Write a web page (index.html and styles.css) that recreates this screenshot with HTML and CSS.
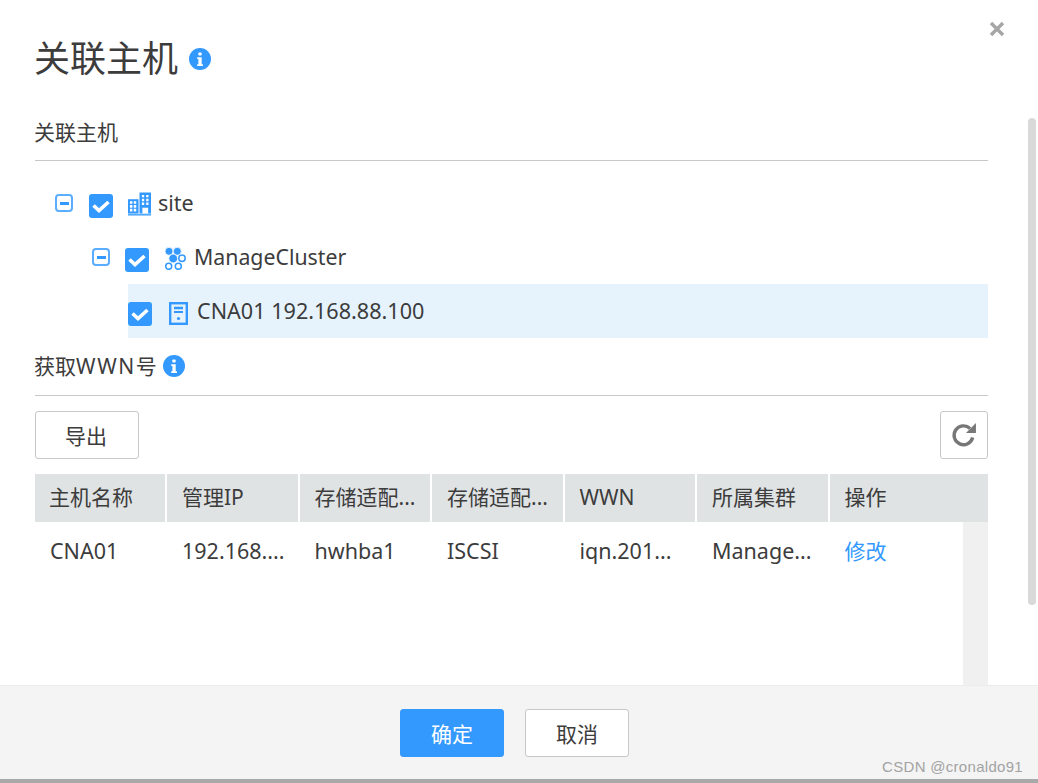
FILE: index.html
```html
<!DOCTYPE html>
<html lang="zh-CN">
<head>
<meta charset="utf-8">
<title>关联主机</title>
<link rel="stylesheet" href="styles.css">
</head>
<body>
<div class="dialog">
  <main class="content">
    <header class="title-row">
      <h1 class="title">关联主机</h1>
      <svg class="info info-lg" viewBox="0 0 22 22"><circle cx="11" cy="11" r="11" fill="#3399ff"/><rect x="9.3" y="4.4" width="3.4" height="3" rx="1" fill="#fff"/><path d="M8.2 9.2h4.5v7h1.2v1.8H8.2v-1.8h1.2v-5.2H8.2z" fill="#fff"/></svg>
    </header>

    <h2 class="section section-first"><span class="section-text">关联主机</span></h2>
    <div class="tree">
      <div class="node level-0">
        <span class="toggle"><i></i></span>
        <span class="check"><svg viewBox="0 0 24 24"><path d="M4.500 11.500l5.500 5 9.500-8.500" fill="none" stroke="#fff" stroke-width="3.600"/></svg></span>
        <svg class="node-icon icon-site" viewBox="0 0 24 24"><g fill="#3399ff"><path d="M0 7h11v15H0z"/><path d="M12 0h12v22H12z"/><path d="M0 22.600h24V24H0z"/></g><g fill="#fff"><path d="M2 9h2.600v2.800H2zM6 9h2.600v2.800H6zM2 13h2.600v2.800H2zM6 13h2.600v2.800H6zM2 17h2.600v2.800H2zM6 17h2.600v2.800H6z"/><path d="M14.500 2.500h2.400v2.500h-2.400zM19 2.500h2.400v2.500H19zM14.500 6.500h2.400v2.500h-2.400zM19 6.500h2.400v2.500H19zM14.500 10.500h2.400v2.500h-2.400zM19 10.500h2.400v2.500H19zM15 16h6v6h-6z"/></g></svg>
        <span class="label label-site">site</span>
      </div>
      <div class="node level-1">
        <span class="toggle"><i></i></span>
        <span class="check"><svg viewBox="0 0 24 24"><path d="M4.500 11.500l5.500 5 9.500-8.500" fill="none" stroke="#fff" stroke-width="3.600"/></svg></span>
        <svg class="node-icon icon-cluster" viewBox="0 0 21 23"><g fill="#3399ff" stroke="#fff" stroke-width="0.800"><circle cx="4" cy="4.300" r="4"/><circle cx="12.300" cy="4.300" r="4"/><circle cx="8.200" cy="11.500" r="4.400"/></g><g fill="none" stroke="#3399ff" stroke-width="1.500"><circle cx="17" cy="11.300" r="3.200"/><circle cx="3.700" cy="19.300" r="3"/><circle cx="13.300" cy="19.300" r="3"/></g></svg>
        <span class="label label-cluster">ManageCluster</span>
      </div>
      <div class="node level-2 selected">
        <span class="check"><svg viewBox="0 0 24 24"><path d="M4.500 11.500l5.500 5 9.500-8.500" fill="none" stroke="#fff" stroke-width="3.600"/></svg></span>
        <svg class="node-icon icon-host" viewBox="0 0 19 23"><path d="M0 0h19v23H0z" fill="#3399ff"/><path d="M2.400 2.400h14.200v18.200H2.400z" fill="#e6f3fd"/><path d="M5 4.800h9v2.400H5zM5 9h9v2H5z" fill="#3399ff"/><circle cx="9.500" cy="16.500" r="1.600" fill="#3399ff"/></svg>
        <span class="label label-host">CNA01 192.168.88.100</span>
      </div>
    </div>

    <h2 class="section section-wwn"><span class="section-text">获取<span class="wide">WWN</span>号</span>
      <svg class="info info-sm" viewBox="0 0 22 22"><circle cx="11" cy="11" r="11" fill="#3399ff"/><rect x="9.300" y="4.400" width="3.400" height="3" rx="1" fill="#fff"/><path d="M8.200 9.200h4.500v7h1.200v1.800H8.200v-1.800h1.200v-5.200H8.200z" fill="#fff"/></svg>
    </h2>

    <div class="toolbar">
      <button class="btn btn-export">导出</button>
      <button class="btn-icon" aria-label="刷新"><svg viewBox="0 0 24 24"><path d="M20 14.300A8.700 8.700 0 1 1 17.600 6" fill="none" stroke="#777" stroke-width="3.100"/><path d="M23 1v9.200h-9.200z" fill="#777"/></svg></button>
    </div>

    <div class="table">
      <div class="thead">
        <div class="th th-first">主机名称</div>
        <div class="th">管理IP</div>
        <div class="th">存储适配...</div>
        <div class="th">存储适配...</div>
        <div class="th">WWN</div>
        <div class="th">所属集群</div>
        <div class="th">操作</div>
      </div>
      <div class="tbody">
        <div class="tr">
          <div class="td">CNA01</div>
          <div class="td">192.168....</div>
          <div class="td">hwhba1</div>
          <div class="td">ISCSI</div>
          <div class="td">iqn.201...</div>
          <div class="td">Manage...</div>
          <div class="td link">修改</div>
        </div>
      </div>
    </div>
  </main>

  <footer class="footer">
    <button class="btn btn-primary">确定</button>
    <button class="btn">取消</button>
  </footer>
  <div class="edge"></div>

  <button class="close" aria-label="关闭"><svg viewBox="0 0 16 16"><path d="M2 2l12 12M14 2L2 14" stroke="#a6a6a6" stroke-width="3.400" fill="none"/></svg></button>
  <div class="scroll-thumb"></div>
  <div class="watermark">CSDN @cronaldo91</div>
</div>
</body>
</html>
```
FILE: styles.css
```css
* { box-sizing: border-box; }
html, body { margin: 0; height: 100%; overflow: hidden; background: #fff; }
body { font-family: "Noto Sans", "Noto Sans CJK SC", sans-serif; color: #3c3c3c; }

.dialog { position: relative; width: 1038px; height: 783px; display: flex; flex-direction: column; }
.content { height: 685px; flex: none; padding: 0 50px 0 35px; overflow: hidden; }

.title-row { height: 118px; display: flex; align-items: center; gap: 11px; }
.title { margin: 0 0 0 -1px; font-size: 36px; font-weight: 400; line-height: 1; }
.info { display: block; flex: none; }
.info-lg { width: 22px; height: 22px; }
.info-sm { width: 22px; height: 22px; margin-left: 6px; }

.section { margin: 0; font-size: 21px; font-weight: 400; line-height: 30px; border-bottom: 1px solid #c8c8c8; display: flex; align-items: center; }
.section-text { margin-left: -1px; }
.wide { letter-spacing: 1.600px; }
.section-first { height: 43px; padding-bottom: 14px; }
.section-wwn { height: 58px; padding-bottom: 1px; }

.tree { padding-top: 15px; }
.node { height: 54px; display: flex; align-items: center; font-size: 21.500px; }
.label { position: relative; top: -1px; }
.label-cluster { font-size: 21.300px; }
.label-host { font-size: 21.600px; }
.level-0 { padding-left: 20px; }
.level-1 { padding-left: 57px; }
.level-1 .toggle { margin-right: 15px; }
.level-2 { margin-left: 93px; }
.selected { background: #e6f3fd; }
.toggle { width: 18px; height: 18px; border: 2px solid #5aadff; border-radius: 4px; display: flex; align-items: center; justify-content: center; margin-right: 16px; flex: none; }
.toggle i { display: block; width: 9px; height: 3px; background: #3399ff; }
.check { width: 24px; height: 24px; background: #3399ff; border-radius: 3px; display: block; flex: none; position: relative; top: 3px; }
.check svg { display: block; width: 24px; height: 24px; }
.node-icon { display: block; flex: none; position: relative; }
.icon-site { width: 23px; height: 24px; margin-left: 15px; margin-right: 7px; top: 1px; }
.icon-cluster { width: 21px; height: 23px; margin-left: 16px; margin-right: 8px; top: 1px; }
.icon-host { width: 19px; height: 23px; margin-left: 17px; margin-right: 9px; top: 2px; }

.toolbar { display: flex; justify-content: space-between; padding-top: 15px; height: 78px; align-items: flex-start; }
.btn { width: 104px; height: 48px; background: #fff; border: 1px solid #c8c8c8; border-radius: 3px; font: inherit; font-size: 21px; color: #3c3c3c; padding: 0 0 0 1px; }
.btn-export { padding: 0 2px 0 0; }
.btn-primary { background: #3399ff; border-color: #3399ff; color: #fff; }
.btn-icon { width: 48px; height: 48px; background: #fff; border: 1px solid #c8c8c8; border-radius: 3px; padding: 0; display: flex; align-items: center; justify-content: center; }
.btn-icon svg { display: block; width: 26px; height: 26px; }

.table { width: 953px; }
.thead, .tr { display: grid; grid-template-columns: 132px repeat(5, 132.500px) 1fr; }
.thead { height: 48px; }
.th { background: #e0e3e4; border-right: 2px solid #fff; padding-left: 15px; font-size: 21px; line-height: 47px; white-space: nowrap; overflow: hidden; }
.th-first { padding-left: 14px; }
.th:last-child { border-right: 0; }
.tbody { height: 163px; background: linear-gradient(to left, #f0f0f0 25px, #fff 25px); }
.tr { height: 60px; }
.td { padding-left: 15px; font-size: 21.500px; line-height: 58px; white-space: nowrap; }
.link { color: #3399ff; font-size: 21px; }

.footer { height: 94px; flex: none; background: #f4f4f4; border-top: 1px solid #ececec; display: flex; justify-content: center; align-items: center; gap: 21px; padding-right: 10px; }
.edge { height: 4px; flex: none; background: #a9a9a9; }

.close { position: absolute; left: 989px; top: 21px; width: 16px; height: 16px; padding: 0; border: 0; background: none; }
.close svg { display: block; width: 16px; height: 16px; }
.scroll-thumb { position: absolute; left: 1028px; top: 118px; width: 8px; height: 487px; border-radius: 4px; background: #d9d9d9; }
.watermark { position: absolute; right: 15px; top: 757px; font-family: "Liberation Sans", sans-serif; font-size: 15px; line-height: 20px; color: #a3a3a3; letter-spacing: 0.300px; }
```
